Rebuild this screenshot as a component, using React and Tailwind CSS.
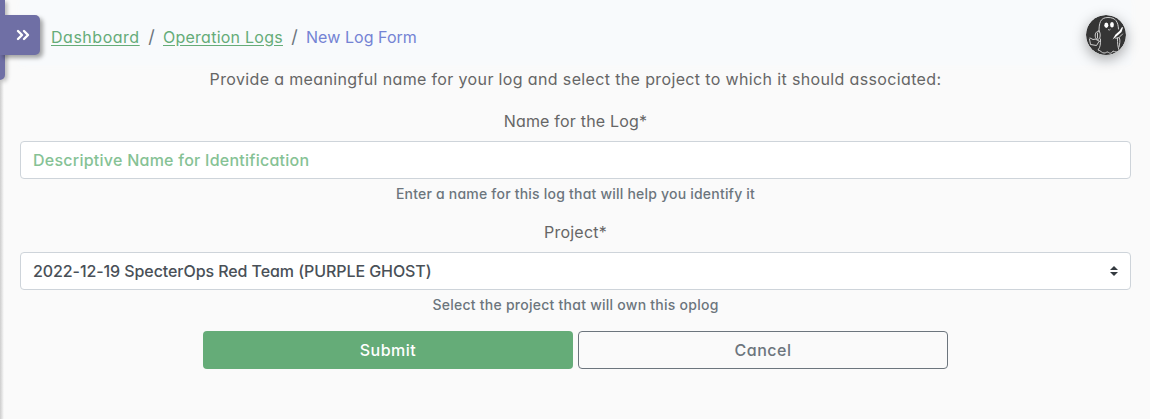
import React from "react";

const FONT = "font-['Inter','Noto_Sans',sans-serif] [font-feature-settings:'cv11'_1]";

function GhostAvatar() {
  return (
    <svg viewBox="0 0 40 40" className="h-10 w-10 rounded-full shadow-[0_4px_14px_rgba(0,0,0,0.35)]">
      <circle cx="20" cy="20" r="20" fill="#353535" />
      <g fill="none" stroke="#cfcfcf" strokeWidth="1" strokeLinejoin="round" strokeLinecap="round">
        <path d="M13 17C13 8 14 2.500 22 2.500S32 7 32.500 14" />
        <path d="M14.500 24c0 5 0 8-2.500 11 3 .5 3.500 3 6 3 2 .3 2.500-1.500 4-1 1.500 1.500 3.500 2 5-1 2 1 4 1.500 6.500 0-2-4-2-8-2-13" />
        <path d="M13 16c-3 0-4.500 3-3.500 6.500 1 2.500 4 2.500 4.500-.5.500-3 0-5-1-6zM11.500 18v5" />
        <path d="M4 23l3 1.500 3-.5M3.500 24l1 5.500 6 1 2.500-4M10 24.500l4 2" />
        <path d="M29 23c3 1 5-1 7.500-4M33.500 23c1 3 0 6-.5 9" />
      </g>
      <path d="M26.500 24.500l3-5 4-3.500 2.500-4 1 .5-1.500 4.500-4 3.500z" fill="#fff" />
      <ellipse cx="20.300" cy="10.300" rx="2" ry="2.700" fill="#fff" />
      <ellipse cx="26" cy="9.800" rx="1.900" ry="2.700" fill="#fff" />
      <path d="M22 14.500q1.500 1.200 2.500-.3" stroke="#ccc" strokeWidth="0.900" fill="none" />
    </svg>
  );
}

export default function App() {
  return (
    <div className={`relative h-[419px] w-[1150px] overflow-hidden bg-[#fafafa] text-base leading-6 text-[#666] ${FONT}`}>
      <div className="absolute inset-y-0 left-0 w-1 bg-linear-to-r from-[#cdcdcd] to-[#fafafa]" />
      <div className="absolute left-0 top-0 h-20 w-[5px] rounded-br-[5px] bg-[#6f6fa5] shadow-[2px_2px_4px_rgba(0,0,0,0.3)]" />
      <button className="absolute left-0 top-[15px] flex h-10 w-10 items-center justify-center rounded-r-[5px] bg-[#6f6fa5] pl-[5px] shadow-[3px_3px_4px_rgba(0,0,0,0.35)]">
        <svg viewBox="0 0 14 12" className="h-3 w-3.5" fill="none" stroke="#fff" strokeWidth="2.400" strokeLinecap="round" strokeLinejoin="round">
          <path d="M2 2l4 4-4 4M8 2l4 4-4 4" />
        </svg>
      </button>
      <header className="ml-5 mr-[19px] flex h-[65px] items-start justify-between bg-[#f8fafc] pl-[31px] pr-[5px] pt-[15px] shadow-[0_0_8px_#f8fafc]">
        <nav className="flex whitespace-nowrap pt-[10px]">
          <a className="w-[89px] tracking-[0.52px] text-[#65ac78] underline underline-offset-2">Dashboard</a>
          <span className="w-[23px] text-center text-lg leading-6 text-[#6c757d]">/</span>
          <a className="w-[120px] tracking-[0.25px] text-[#65ac78] underline underline-offset-2">Operation Logs</a>
          <span className="w-[23px] text-center text-lg leading-6 text-[#6c757d]">/</span>
          <span className="tracking-[0.05px] text-[#7483d4]">New Log Form</span>
        </nav>
        <GhostAvatar />
      </header>
      <main className="flex flex-col pl-5 pr-[19px] pt-0.5 text-center">
        <p className="tracking-[0.36px]">Provide a meaningful name for your log and select the project to which it should associated:</p>
        <label className="mt-[18px] tracking-[0.2px]">Name for the Log*</label>
        <div className="mt-2 flex h-[38px] items-center rounded border border-[#ced4da] bg-white px-3 font-medium text-[#86c295]">
          <span className="tracking-[0.25px]">Descriptive Name for Identification</span>
        </div>
        <small className="mt-1 text-sm leading-[21px] font-medium tracking-[0.21px] text-[#6c757d]">Enter a name for this log that will help you identify it</small>
        <label className="mt-4 tracking-[0.2px]">Project*</label>
        <div className="mt-2 flex h-[38px] items-center justify-between rounded border border-[#ced4da] bg-white px-3 font-medium text-[#495057]">
          <span className="tracking-[-0.08px]">2022-12-19 SpecterOps Red Team (PURPLE GHOST)</span>
          <svg viewBox="0 0 8 10" className="h-2.5 w-2" fill="#343a40"><path d="M4 0L0 4h8zM4 10L0 6h8z" /></svg>
        </div>
        <small className="mt-1 text-sm leading-[21px] font-medium tracking-[0.25px] text-[#6c757d]">Select the project that will own this oplog</small>
        <div className="mt-4 flex justify-center gap-[5px] font-medium tracking-[0.5px]">
          <button className="h-[38px] w-[370px] rounded bg-[#65ac78] text-white">Submit</button>
          <button className="h-[38px] w-[370px] rounded border border-[#6c757d] text-[#6c757d]">Cancel</button>
        </div>
      </main>
    </div>
  );
}
